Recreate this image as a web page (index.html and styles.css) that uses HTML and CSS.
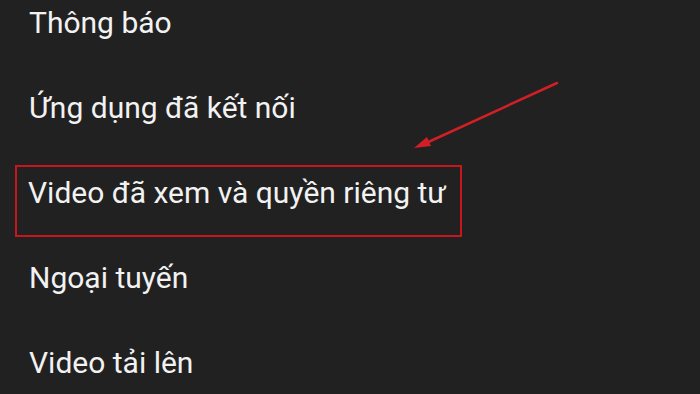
FILE: index.html
```html
<!DOCTYPE html>
<html lang="vi">
<head>
  <meta charset="UTF-8" />
  <title>Cài đặt</title>
  <link rel="stylesheet" href="styles.css">
</head>
<body>

<ul class="menu">
  <li class="item">Thông báo</li>
  <li class="item">Ứng dụng đã kết nối</li>
  <li class="item highlight">Video đã xem và quyền riêng tư</li>
  <li class="item">Ngoại tuyến</li>
  <li class="item">Video tải lên</li>
</ul>

<svg class="arrow" width="700" height="394" viewBox="0 0 700 394">
  <line x1="557" y1="83" x2="424" y2="144" stroke="#d11f26" stroke-width="2.5" stroke-linecap="round"/>
  <polygon points="414,148 427,137 431,146" fill="#d11f26"/>
</svg>

</body>
</html>
```

FILE: styles.css
```css
html, body {
  margin: 0;
  padding: 0;
}
body {
  width: 700px;
  height: 394px;
  background: #212121;
  font-family: Roboto, "Noto Sans", sans-serif;
  color: #f2f2f2;
  overflow: hidden;
  position: relative;
}
.menu {
  list-style: none;
  margin: -20px 0 0 0;
  padding: 0;
  display: flex;
  flex-direction: column;
}
.item {
  height: 85px;
  line-height: 85px;
  font-size: 30px;
  padding-left: 29px;
  box-sizing: border-box;
}
.highlight {
  margin: 15px 0 -2px 15px;
  padding: 0 0 16px 11px;
  width: 447px;
  height: 72px;
  line-height: 52px;
  border: 2px solid #c8161d;
}
.arrow {
  position: absolute;
  left: 0;
  top: 0;
}
```
